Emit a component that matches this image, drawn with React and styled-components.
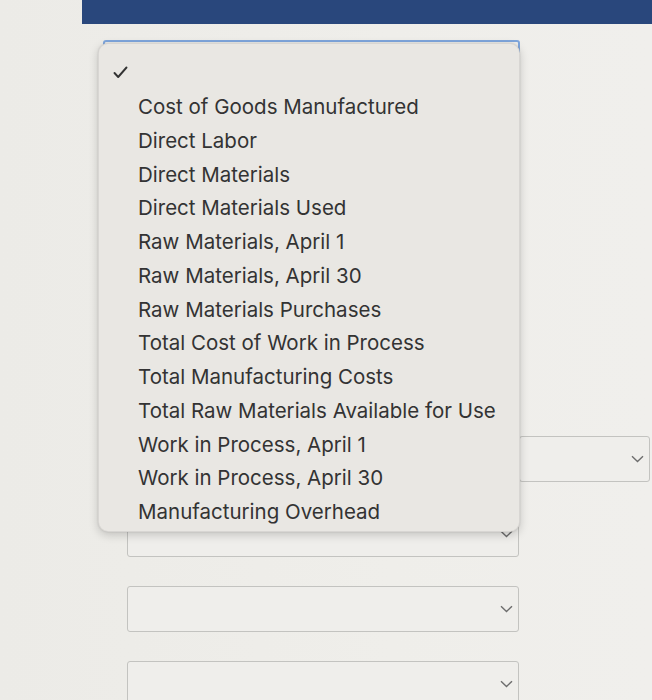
import styled, { createGlobalStyle } from "styled-components"

const GlobalStyle = createGlobalStyle`
  html, body {
    margin: 0;
    padding: 0;
    background: #edece8;
    font-family: Inter, "Liberation Sans", sans-serif;
    overflow: hidden;
  }
`

const options = [
  "Cost of Goods Manufactured",
  "Direct Labor",
  "Direct Materials",
  "Direct Materials Used",
  "Raw Materials, April 1",
  "Raw Materials, April 30",
  "Raw Materials Purchases",
  "Total Cost of Work in Process",
  "Total Manufacturing Costs",
  "Total Raw Materials Available for Use",
  "Work in Process, April 1",
  "Work in Process, April 30",
  "Manufacturing Overhead",
]

// which rows carry a second select on the right
const rows = [false, false, false, false, true, false, false, false]

function Chevron() {
  return (
    <svg width='13' height='8' viewBox='0 0 13 8'>
      <path d='M1 1.2 L6.5 6.5 L12 1.2' fill='none' stroke='#6d6d6d' strokeWidth='1.4' />
    </svg>
  )
}

function Check() {
  return (
    <svg width='15' height='13' viewBox='0 0 15 13'>
      <path d='M1.5 7 L5.2 11 L13.5 1.5' fill='none' stroke='#333' strokeWidth='1.9' strokeLinecap='round' strokeLinejoin='round' />
    </svg>
  )
}

function App() {
  return (
    <Page>
      <GlobalStyle />
      <TopBar />
      <Form>
        <FocusedSelect />
        {rows.map((right, i) => (
          <Row key={i}>
            <Select>
              <Chevron />
            </Select>
            {right && (
              <Select>
                <Chevron />
              </Select>
            )}
          </Row>
        ))}
        <Menu>
          <Item>
            <Check />
          </Item>
          {options.map((o) => (
            <Item key={o}>
              <span />
              <span>{o}</span>
            </Item>
          ))}
        </Menu>
      </Form>
    </Page>
  )
}

export default App

const Page = styled.div`
  height: 700px;
  background: linear-gradient(90deg, #ecebe7 0%, #efeeea 60%, #f0efec 100%);
`

const TopBar = styled.div`
  height: 24px;
  margin-left: 82px;
  background: #29477c;
`

const Form = styled.div`
  position: relative;
  display: flex;
  flex-direction: column;
  gap: 29px;
  padding: 16px 0 0 127px;
`

const Row = styled.div`
  display: grid;
  grid-template-columns: 392px 131px;
`

const Select = styled.div`
  height: 46px;
  box-sizing: border-box;
  border: 1px solid #c3c3c0;
  border-radius: 3px;
  background: #efeeeb;
  display: flex;
  align-items: center;
  justify-content: flex-end;
  padding-right: 5px;
`

const FocusedSelect = styled(Select)`
  width: 417px;
  margin: 0 0 21px -24px;
  border: 2px solid #7fa6dc;
`

const Menu = styled.div`
  position: absolute;
  top: 19px;
  left: 98px;
  width: 422px;
  height: 489px;
  box-sizing: border-box;
  padding: 12px 0 4px;
  border-radius: 10px;
  background: #e9e7e3;
  border: 1px solid rgba(0, 0, 0, 0.07);
  box-shadow: 0 3px 10px rgba(0, 0, 0, 0.18), 0 0 2px rgba(0, 0, 0, 0.12);
`

const Item = styled.div`
  height: 33.75px;
  display: grid;
  grid-template-columns: 25px 1fr;
  align-items: center;
  padding-left: 14px;
  font-size: 20.5px;
  color: #333333;
  white-space: nowrap;
`
